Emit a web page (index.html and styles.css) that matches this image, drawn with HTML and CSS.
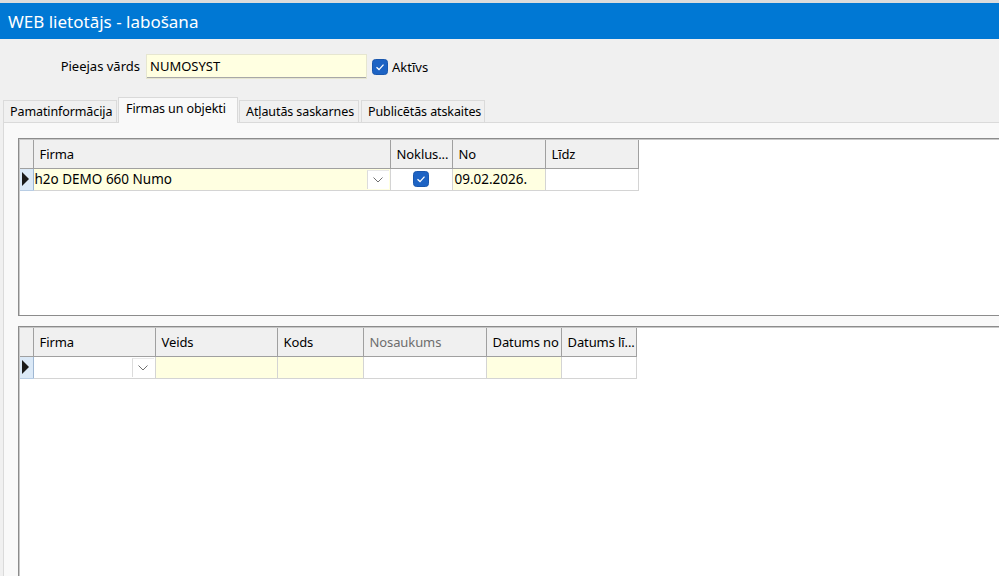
FILE: index.html
```html
<!DOCTYPE html>
<html lang="lv">
<head>
<meta charset="utf-8">
<title>WEB lietotājs - labošana</title>
<link rel="stylesheet" href="styles.css">
</head>
<body>
<div class="window">
  <div class="topstrip"></div>
  <div class="titlebar">WEB lietotājs - labošana</div>
  <div class="form-row">
    <label class="lbl">Pieejas vārds</label>
    <div class="input">NUMOSYST</div>
    <span class="chk"><svg viewBox="0 0 16 16" width="16" height="16"><rect x="0.5" y="0.5" width="15" height="15" rx="3" fill="#1d63c4" stroke="#1a57ad"/><path d="M4.5 8.3 L7 10.6 L11.5 5.6" fill="none" stroke="#fff" stroke-width="1.3"/></svg></span>
    <span class="chk-label">Aktīvs</span>
  </div>
  <div class="tabs">
    <div class="tab">Pamatinformācija</div>
    <div class="tab active">Firmas un objekti</div>
    <div class="tab">Atļautās saskarnes</div>
    <div class="tab">Publicētās atskaites</div>
  </div>
  <div class="panel">
    <div class="grid grid1">
      <table>
        <colgroup><col class="c-ind"><col style="width:357px"><col style="width:62px"><col style="width:93px"><col style="width:93px"></colgroup>
        <thead><tr><th class="ind"></th><th>Firma</th><th>Noklus...</th><th>No</th><th>Līdz</th></tr></thead>
        <tbody><tr>
          <td class="ind"><span class="tri"></span></td>
          <td class="yel combo"><span>h2o DEMO 660 Numo</span><span class="dd"><svg viewBox="0 0 10 6" width="10" height="6"><path d="M0.5 0.5 L5 5 L9.5 0.5" fill="none" stroke="#707070" stroke-width="1"/></svg></span></td>
          <td class="center"><svg viewBox="0 0 16 16" width="16" height="16"><rect x="0.5" y="0.5" width="15" height="15" rx="3" fill="#1d63c4" stroke="#1a57ad"/><path d="M4.5 8.3 L7 10.6 L11.5 5.6" fill="none" stroke="#fff" stroke-width="1.3"/></svg></td>
          <td class="yel">09.02.2026.</td>
          <td></td>
        </tr></tbody>
      </table>
    </div>
    <div class="grid grid2">
      <table>
        <colgroup><col class="c-ind"><col style="width:122px"><col style="width:122px"><col style="width:86px"><col style="width:123px"><col style="width:75px"><col style="width:75px"></colgroup>
        <thead><tr><th class="ind"></th><th>Firma</th><th>Veids</th><th>Kods</th><th class="dim">Nosaukums</th><th>Datums no</th><th>Datums lī...</th></tr></thead>
        <tbody><tr>
          <td class="ind"><span class="tri"></span></td>
          <td class="combo"><span></span><span class="dd"><svg viewBox="0 0 10 6" width="10" height="6"><path d="M0.5 0.5 L5 5 L9.5 0.5" fill="none" stroke="#707070" stroke-width="1"/></svg></span></td>
          <td class="yel"></td>
          <td class="yel"></td>
          <td></td>
          <td class="yel"></td>
          <td></td>
        </tr></tbody>
      </table>
    </div>
  </div>
</div>
</body>
</html>
```

FILE: styles.css
```css
* { box-sizing: border-box; }
html, body { margin: 0; padding: 0; }
body {
  width: 999px;
  height: 576px;
  overflow: hidden;
  font-family: "Noto Sans", "Open Sans", sans-serif;
  font-size: 13px;
  color: #000;
  background: #f0f0f0;
}
.window { display: flex; flex-direction: column; height: 576px; }
.topstrip { height: 3px; background: #dcdcdc; flex: none; }
.titlebar {
  height: 36px;
  flex: none;
  background: #0078d4;
  color: #fff;
  font-size: 17px;
  padding-left: 8px;
  display: flex;
  align-items: center;
}
.form-row {
  height: 58px;
  flex: none;
  display: flex;
  align-items: flex-start;
  padding-top: 16px;
}
.lbl {
  width: 140px;
  text-align: right;
  line-height: 23px;
  margin-right: 7px;
}
.input {
  width: 219px;
  height: 23px;
  background: #ffffe1;
  border-bottom: 1px solid #a8a8a8;
  box-shadow: 0 0 0 1px #e6e6d0;
  padding-left: 3px;
  line-height: 22px;
  margin-right: 6px;
}
.chk { display: flex; padding-top: 4px; margin-right: 4px; }
.chk-label { line-height: 25px; }
.tabs {
  height: 25px;
  flex: none;
  display: flex;
  align-items: flex-end;
  padding-left: 3px;
  position: relative;
  z-index: 1;
}
.tab {
  height: 22px;
  line-height: 21px;
  padding: 0 0 0 6px;
  border: 1px solid #dadada;
  border-bottom: none;
  background: #f0f0f0;
  margin-right: 1px;
  white-space: nowrap;
  overflow: hidden;
  font-size: 12.5px;
  letter-spacing: -0.1px;
}
.tab:nth-child(1) { width: 114px; }
.tab:nth-child(3) { width: 120px; margin-right: 2px; }
.tab:nth-child(4) { width: 124px; }
.tab.active {
  width: 120px;
  height: 26px;
  margin-bottom: -1px;
  line-height: 22px;
  background: #f9f9f9;
  border-color: #d9d9d9;
  padding-left: 7px;
}
.panel {
  flex: 1;
  margin-left: 3px;
  background: #f9f9f9;
  border-top: 1px solid #dadada;
  border-left: 1px solid #dadada;
  padding: 15px 0 0 14px;
  display: flex;
  flex-direction: column;
  gap: 10px;
  min-height: 0;
}
.grid {
  background: #fff;
  border-top: 1px solid #8c8c8c;
  border-left: 1px solid #8c8c8c;
  box-shadow: inset 1px 1px 0 #c8c8c8;
  padding: 1px 0 0 1px;
  flex: none;
}
.grid1 { height: 178px; border-bottom: 1px solid #8c8c8c; }
.grid2 { flex: 1; }
table {
  border-collapse: collapse;
  table-layout: fixed;
}
.grid1 table { width: 618px; }
.grid2 table { width: 616px; }
col.c-ind { width: 13px; }
th {
  height: 28px;
  background: #f0f0f0;
  font-weight: normal;
  text-align: left;
  padding: 0 4px 0 6px;
  vertical-align: middle;
  border-right: 1px solid #a0a0a0;
  border-bottom: 1px solid #a0a0a0;
  white-space: nowrap;
  overflow: hidden;
  letter-spacing: -0.1px;
}
th.dim { color: #6d6d6d; }
td {
  height: 22px;
  padding: 0 2px;
  border-right: 1px solid #d4d4d4;
  border-bottom: 1px solid #d4d4d4;
  background: #fff;
  white-space: nowrap;
  overflow: hidden;
  font-size: 13.5px;
}
th.ind { padding: 0; }
td.ind {
  padding: 0;
  background: #dbe9f7;
  border-right: 1px solid #9fb7d2;
  border-bottom: 1px solid #b8cde4;
}
.tri {
  display: block;
  width: 0; height: 0;
  margin-left: 2px;
  border-top: 7px solid transparent;
  border-bottom: 7px solid transparent;
  border-left: 7px solid #1a1a1a;
}
td.yel { background: #ffffe1; }
td.center { text-align: center; padding: 0; line-height: 0; }
td.combo { padding: 0 0 0 1px; position: relative; }
.dd {
  position: absolute;
  right: 1px; top: 1px; bottom: 1px;
  width: 22px;
  background: #fff;
  border-left: 1px solid #dcdcdc;
  border-top: 1px solid #e8e8e8;
  display: flex;
  align-items: center;
  justify-content: center;
}
```
